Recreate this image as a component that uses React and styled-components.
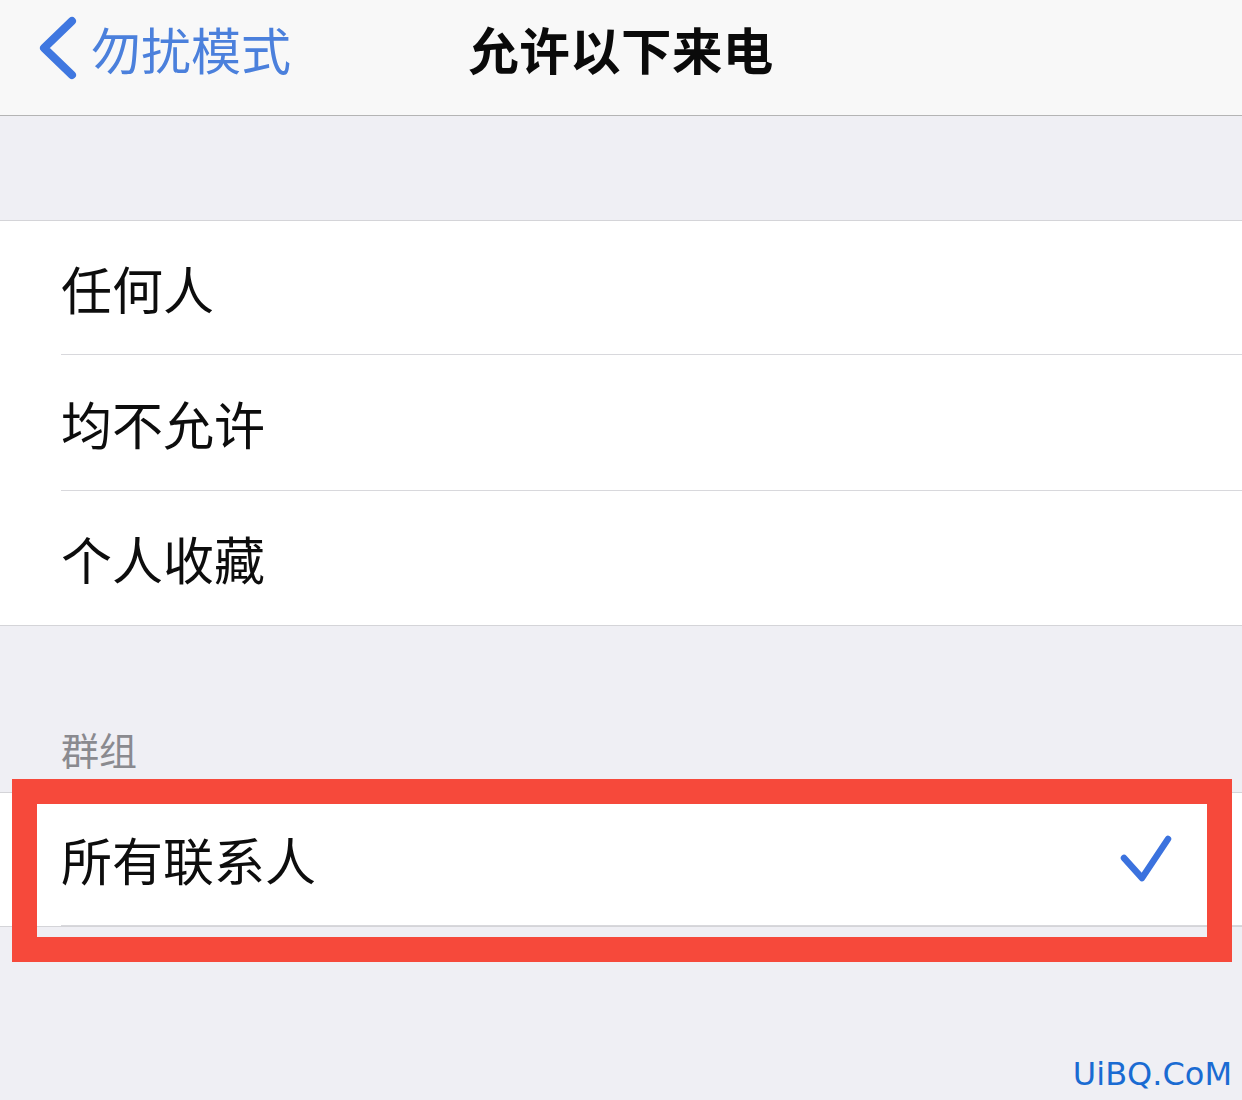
import React from 'react';
import styled, { createGlobalStyle } from 'styled-components';

const GlobalStyle = createGlobalStyle`
  html, body {
    margin: 0;
    padding: 0;
    background: #efeff4;
  }
  body {
    font-family: "Noto Sans CJK SC", "Noto Sans", sans-serif;
    -webkit-font-smoothing: antialiased;
  }
`;

const Page = styled.div`
  width: 1242px;
  height: 1100px;
  background: #efeff4;
  display: flex;
  flex-direction: column;
  overflow: hidden;
`;

const NavBar = styled.header`
  height: 96px;
  padding-bottom: 19px;
  background: #f8f8f8;
  border-bottom: 1px solid #b4b4b4;
  display: grid;
  grid-template-columns: 1fr auto 1fr;
  align-items: center;
`;

const BackButton = styled.div`
  display: flex;
  align-items: center;
  gap: 13px;
  padding-left: 38px;
  color: #4b80dc;
  font-size: 50px;
  line-height: 96px;
`;

const Title = styled.h1`
  margin: 0;
  font-size: 50.5px;
  font-weight: 600;
  line-height: 96px;
  color: #0a0a0a;
  letter-spacing: 0.4px;
`;

const Spacer = styled.div`
  height: ${p => p.$h}px;
`;

const SectionHeader = styled.div`
  height: 166px;
  box-sizing: border-box;
  display: flex;
  align-items: flex-end;
  padding: 0 0 24px 61px;
  font-size: 38px;
  line-height: 38px;
  color: #8a8a8f;
`;

const Group = styled.ul`
  position: relative;
  list-style: none;
  margin: 0;
  padding: 0;
  background: #ffffff;
  border-top: 1px solid #d4d4d8;
  border-bottom: 1px solid #d4d4d8;
`;

const Row = styled.li`
  height: ${p => p.$h || 134}px;
  margin-left: 61px;
  padding-right: 70px;
  display: flex;
  align-items: center;
  justify-content: space-between;
  font-size: 51px;
  color: #0d0d0d;
  border-bottom: 1px solid #d8d8dc;

  &:last-child {
    border-bottom: none;
  }
`;

const Highlight = styled.div`
  position: absolute;
  top: -14px;
  left: 12px;
  right: 10px;
  bottom: -36px;
  border: 25px solid #f6493b;
  pointer-events: none;
`;

const Watermark = styled.div`
  margin-top: auto;
  padding: 0 10px 6px 0;
  align-self: flex-end;
  font-family: "DejaVu Sans", Verdana, sans-serif;
  font-size: 32px;
  line-height: 40px;
  color: #1a6bd2;
`;

function Chevron() {
  return (
    <svg width="40" height="64" viewBox="0 0 40 64">
      <polyline
        points="34,5 6,32 34,59"
        fill="none"
        stroke="#3f77e0"
        strokeWidth="8"
        strokeLinecap="round"
        strokeLinejoin="round"
      />
    </svg>
  );
}

function Check() {
  return (
    <svg width="54" height="48" viewBox="0 0 54 48">
      <polyline
        points="6,23 24,43 50,4"
        fill="none"
        stroke="#3b72de"
        strokeWidth="6.5"
        strokeLinecap="round"
        strokeLinejoin="round"
      />
    </svg>
  );
}

export default function App() {
  return (
    <Page>
      <GlobalStyle />
      <NavBar>
        <BackButton>
          <Chevron />
          <span>勿扰模式</span>
        </BackButton>
        <Title>允许以下来电</Title>
        <div />
      </NavBar>

      <Spacer $h={104} />

      <Group>
        <Row $h={133}>任何人</Row>
        <Row $h={135}>均不允许</Row>
        <Row $h={134}>个人收藏</Row>
      </Group>

      <SectionHeader>群组</SectionHeader>

      <Group>
        <Row $h={132}>
          <span>所有联系人</span>
          <Check />
        </Row>
        <Highlight />
      </Group>

      <Watermark>UiBQ.CoM</Watermark>
    </Page>
  );
}
